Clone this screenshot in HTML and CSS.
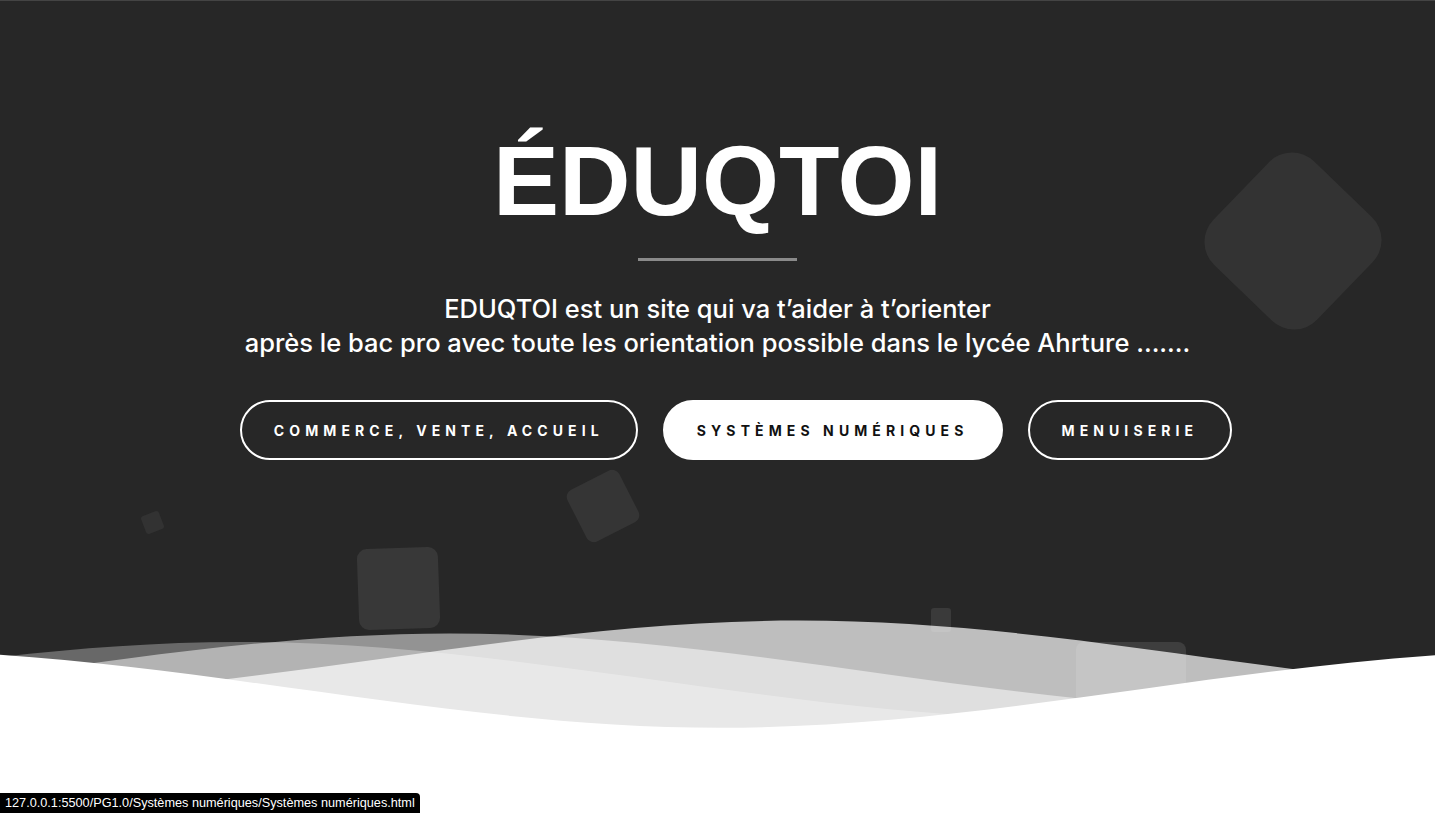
FILE: index.html
```html
<!DOCTYPE html>
<html lang="fr">
<head>
<meta charset="utf-8">
<title>EDUQTOI</title>
<link rel="stylesheet" href="styles.css">
</head>
<body>
<header class="hero">
  <div class="shapes" aria-hidden="true">
    <span class="shape shape-diamond"></span>
    <span class="shape shape-tilt"></span>
    <span class="shape shape-tiny"></span>
    <span class="shape shape-box"></span>
    <span class="shape shape-dot"></span>
    <span class="shape shape-low"></span>
  </div>
  <div class="hero-content">
    <h1 class="title">ÉDUQTOI</h1>
    <div class="divider"></div>
    <p class="lead">EDUQTOI est un site qui va t’aider à t’orienter<br>après le bac pro avec toute les orientation possible dans le lycée Ahrture .......</p>
    <nav class="actions">
      <a class="btn" href="#">Commerce, vente, accueil</a>
      <a class="btn btn-solid" href="#">Systèmes numériques</a>
      <a class="btn" href="#">Menuiserie</a>
    </nav>
  </div>
  <svg class="waves" viewBox="0 24 150 28" preserveAspectRatio="none" aria-hidden="true">
    <defs>
      <path id="wave" d="M-160 44c30 0 58-18 88-18s58 18 88 18 58-18 88-18 58 18 88 18v44h-352z"/>
    </defs>
    <use href="#wave" x="-20.5" y="0" fill="rgba(255,255,255,0.7)"/>
    <use href="#wave" x="119" y="3" fill="rgba(255,255,255,0.5)"/>
    <use href="#wave" x="97" y="5" fill="rgba(255,255,255,0.3)"/>
    <use href="#wave" x="59.3" y="7" fill="#fff"/>
  </svg>
</header>
<main class="page"></main>
<div class="statusbar">127.0.0.1:5500/PG1.0/Systèmes numériques/Systèmes numériques.html</div>
</body>
</html>
```
FILE: styles.css
```css
* { box-sizing: border-box; }

html, body {
  margin: 0;
  padding: 0;
  background: #ffffff;
  overflow: hidden;
}

body {
  font-family: "Inter", "Liberation Sans", sans-serif;
}

.hero {
  position: relative;
  height: 732px;
  background: #272727;
  box-shadow: inset 0 1px 0 #444444;
  overflow: hidden;
}

.shapes {
  position: absolute;
  inset: 0;
}

.shape {
  position: absolute;
  display: block;
  background: #333333;
}

.shape-diamond {
  left: 1221px;
  top: 169px;
  width: 144px;
  height: 144px;
  border-radius: 32px;
  transform: rotate(44deg);
}

.shape-tilt {
  left: 574px;
  top: 477px;
  width: 58px;
  height: 58px;
  border-radius: 8px;
  transform: rotate(-27deg);
  background: #353535;
}

.shape-tiny {
  left: 143px;
  top: 513px;
  width: 19px;
  height: 19px;
  border-radius: 3px;
  transform: rotate(-21deg);
  background: #323232;
}

.shape-box {
  left: 358px;
  top: 548px;
  width: 81px;
  height: 81px;
  border-radius: 10px;
  transform: rotate(-2deg);
  background: #383838;
}

.shape-dot {
  left: 931px;
  top: 608px;
  width: 20px;
  height: 24px;
  border-radius: 3px;
  background: #3a3a3a;
}

.shape-low {
  left: 1076px;
  top: 642px;
  width: 110px;
  height: 110px;
  border-radius: 8px;
  background: #3e3e3e;
}

.hero-content {
  position: relative;
  z-index: 1;
  display: flex;
  flex-direction: column;
  align-items: center;
  padding-top: 131px;
  color: #ffffff;
  text-align: center;
}

.title {
  margin: 0;
  font-family: "Liberation Sans", Arial, sans-serif;
  font-weight: 700;
  font-size: 99px;
  line-height: 99px;
  letter-spacing: 0;
}

.divider {
  width: 159px;
  height: 3px;
  margin-top: 28px;
  background: #8a8a8a;
}

.lead {
  margin: 31px 0 0;
  font-family: "Inter", sans-serif;
  font-weight: 500;
  font-size: 25.5px;
  line-height: 34px;
  letter-spacing: 0;
}

.actions {
  display: flex;
  gap: 25px;
  margin-top: 40px;
  padding-left: 37px;
}

.btn {
  display: flex;
  align-items: center;
  height: 60px;
  padding: 0 32px;
  border: 2px solid #ffffff;
  border-radius: 30px;
  color: #ffffff;
  text-decoration: none;
  text-transform: uppercase;
  font-family: "Inter", sans-serif;
  font-weight: 700;
  font-size: 14px;
  letter-spacing: 5.1px;
}

.btn-solid {
  background: #ffffff;
  color: #111111;
}

.waves {
  position: absolute;
  left: 0;
  bottom: 0;
  z-index: 2;
  width: 100%;
  height: 120px;
  display: block;
}

.page {
  height: 81px;
  background: #ffffff;
}

.statusbar {
  position: fixed;
  left: 0;
  bottom: 0;
  z-index: 10;
  height: 20px;
  padding: 0 5px;
  background: #000000;
  color: #ffffff;
  border-top-right-radius: 4px;
  font-family: "Liberation Sans", Arial, sans-serif;
  font-size: 12.7px;
  line-height: 20px;
  white-space: nowrap;
}
```
